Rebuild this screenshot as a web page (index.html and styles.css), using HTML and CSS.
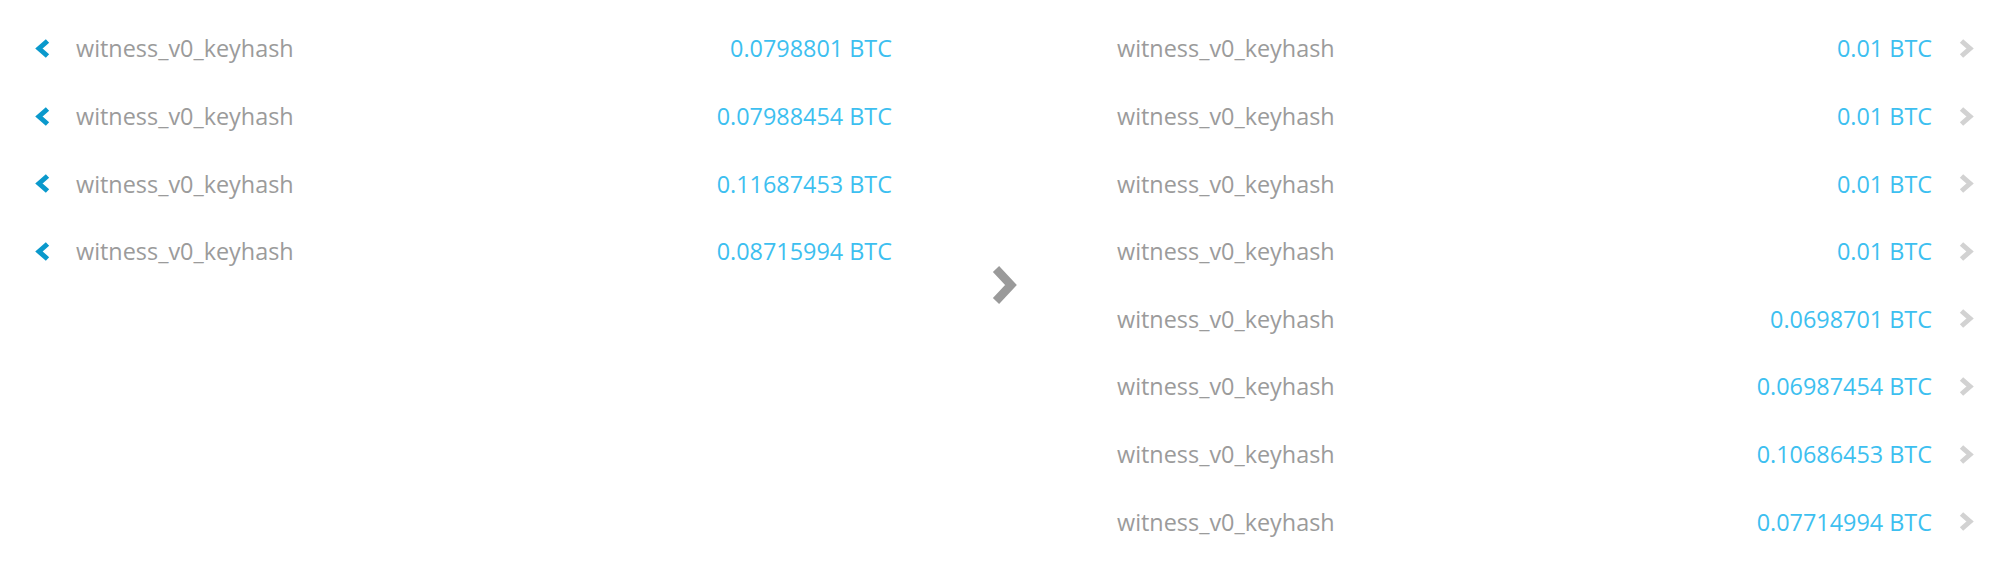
FILE: index.html
```html
<!DOCTYPE html>
<html>
<head>
<meta charset="utf-8">
<link rel="stylesheet" href="styles.css">
</head>
<body>
<div class="tx">
  <div class="col inputs">
    <div class="row">
      <svg class="chev-in" viewBox="0 0 15 21"><polyline points="12.5,3 4,10.5 12.5,18"/></svg>
      <span class="type">witness_v0_keyhash</span>
      <span class="amt">0.0798801 BTC</span>
    </div>
    <div class="row">
      <svg class="chev-in" viewBox="0 0 15 21"><polyline points="12.5,3 4,10.5 12.5,18"/></svg>
      <span class="type">witness_v0_keyhash</span>
      <span class="amt">0.07988454 BTC</span>
    </div>
    <div class="row">
      <svg class="chev-in" viewBox="0 0 15 21"><polyline points="12.5,3 4,10.5 12.5,18"/></svg>
      <span class="type">witness_v0_keyhash</span>
      <span class="amt">0.11687453 BTC</span>
    </div>
    <div class="row">
      <svg class="chev-in" viewBox="0 0 15 21"><polyline points="12.5,3 4,10.5 12.5,18"/></svg>
      <span class="type">witness_v0_keyhash</span>
      <span class="amt">0.08715994 BTC</span>
    </div>
  </div>
  <div class="mid">
    <svg class="chev-mid" viewBox="0 0 27 42"><polyline points="5,5 20,21 5,37"/></svg>
  </div>
  <div class="col outputs">
    <div class="row">
      <span class="type">witness_v0_keyhash</span>
      <span class="amt">0.01 BTC</span>
      <svg class="chev-out" viewBox="0 0 15 21"><polyline points="2.5,3 11,10.5 2.5,18"/></svg>
    </div>
    <div class="row">
      <span class="type">witness_v0_keyhash</span>
      <span class="amt">0.01 BTC</span>
      <svg class="chev-out" viewBox="0 0 15 21"><polyline points="2.5,3 11,10.5 2.5,18"/></svg>
    </div>
    <div class="row">
      <span class="type">witness_v0_keyhash</span>
      <span class="amt">0.01 BTC</span>
      <svg class="chev-out" viewBox="0 0 15 21"><polyline points="2.5,3 11,10.5 2.5,18"/></svg>
    </div>
    <div class="row">
      <span class="type">witness_v0_keyhash</span>
      <span class="amt">0.01 BTC</span>
      <svg class="chev-out" viewBox="0 0 15 21"><polyline points="2.5,3 11,10.5 2.5,18"/></svg>
    </div>
    <div class="row">
      <span class="type">witness_v0_keyhash</span>
      <span class="amt">0.0698701 BTC</span>
      <svg class="chev-out" viewBox="0 0 15 21"><polyline points="2.5,3 11,10.5 2.5,18"/></svg>
    </div>
    <div class="row">
      <span class="type">witness_v0_keyhash</span>
      <span class="amt">0.06987454 BTC</span>
      <svg class="chev-out" viewBox="0 0 15 21"><polyline points="2.5,3 11,10.5 2.5,18"/></svg>
    </div>
    <div class="row">
      <span class="type">witness_v0_keyhash</span>
      <span class="amt">0.10686453 BTC</span>
      <svg class="chev-out" viewBox="0 0 15 21"><polyline points="2.5,3 11,10.5 2.5,18"/></svg>
    </div>
    <div class="row">
      <span class="type">witness_v0_keyhash</span>
      <span class="amt">0.07714994 BTC</span>
      <svg class="chev-out" viewBox="0 0 15 21"><polyline points="2.5,3 11,10.5 2.5,18"/></svg>
    </div>
  </div>
</div>
</body>
</html>
```

FILE: styles.css
```css
html, body {
  margin: 0;
  padding: 0;
  background: #ffffff;
}
body {
  font-family: "Open Sans", "Liberation Sans", sans-serif;
  font-size: 23.4px;
  width: 2000px;
  height: 570px;
  overflow: hidden;
}
.tx {
  display: flex;
  align-items: center;
  padding: 14.7px 0 0 35px;
}
.col {
  width: 857px;
  display: flex;
  flex-direction: column;
  align-self: flex-start;
}
.row {
  height: 67.6px;
  display: flex;
  align-items: center;
}
.type {
  color: #9b9b9b;
  flex: 1;
}
.amt {
  color: #3dbff0;
}
.chev-in {
  width: 15px;
  height: 21px;
  margin-right: 26px;
  flex: none;
  overflow: visible;
}
.chev-in polyline {
  fill: none;
  stroke: #0a99cc;
  stroke-width: 5;
}
.chev-out {
  width: 15px;
  height: 21px;
  margin-left: 27px;
  flex: none;
  overflow: visible;
}
.chev-out polyline {
  fill: none;
  stroke: #d2d2d2;
  stroke-width: 5;
}
.mid {
  width: 225px;
  height: 541px;
  display: flex;
  align-items: center;
  justify-content: center;
}
.chev-mid {
  width: 27px;
  height: 42px;
  overflow: visible;
}
.chev-mid polyline {
  fill: none;
  stroke: #9a9a9a;
  stroke-width: 8.5;
}
```
